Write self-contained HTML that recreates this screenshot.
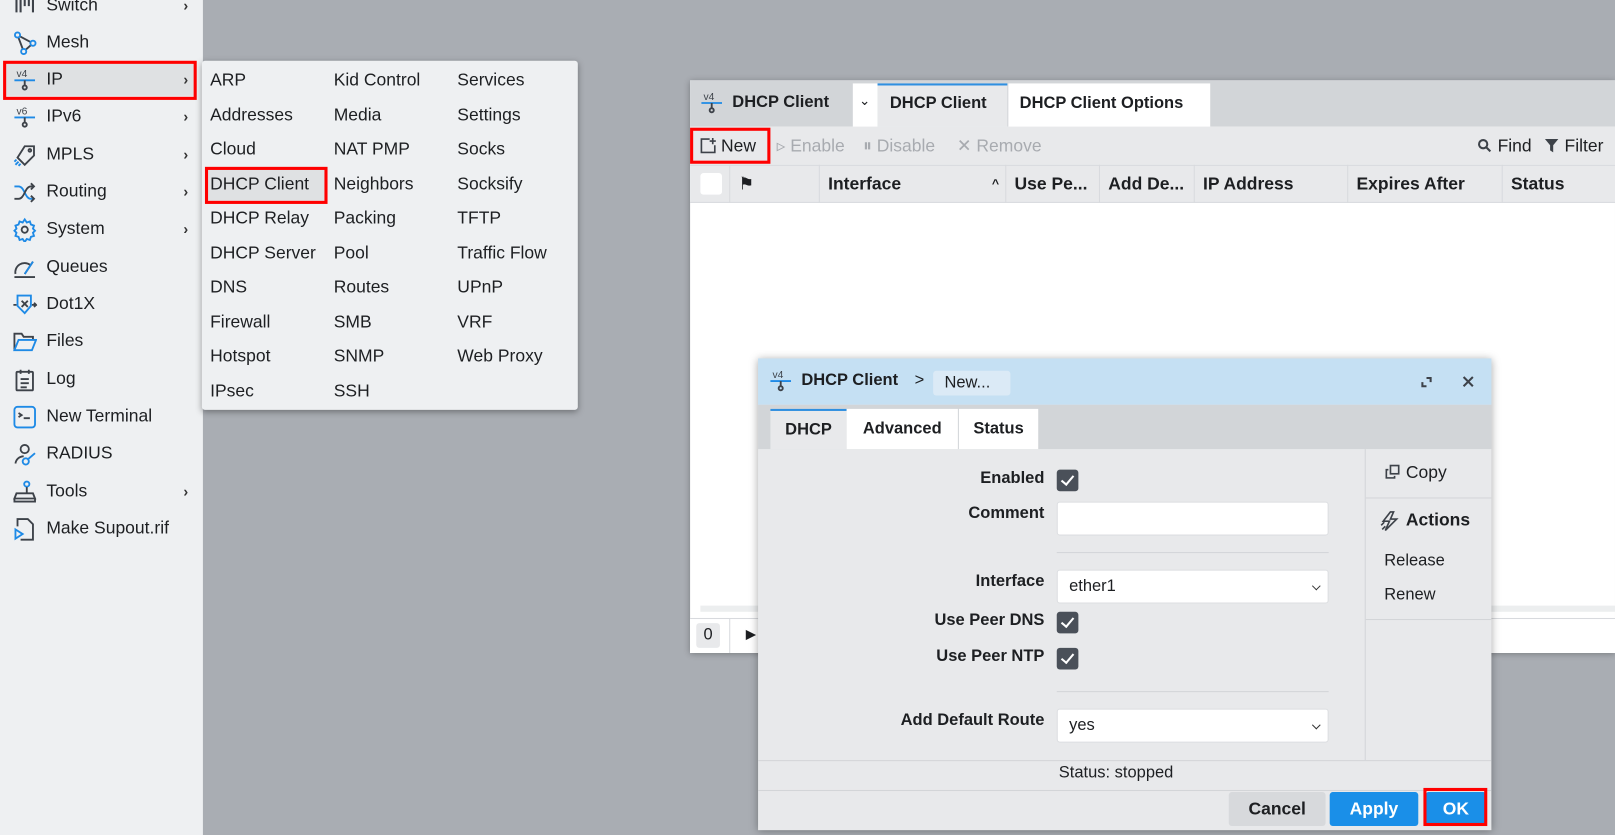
<!DOCTYPE html>
<html><head><meta charset="utf-8"><style>
*{box-sizing:border-box;margin:0;padding:0}
html,body{width:1615px;height:835px;overflow:hidden;background:#a9adb3}
body{font-family:"Liberation Sans",sans-serif;color:#1d1f22}
#wrap{position:absolute;left:0;top:0;width:1568px;height:811px;transform:scale(1.02997);transform-origin:0 0}
.a{position:absolute}
#side{left:0;top:0;width:197px;height:811px;background:#eef0f2}
.si{position:absolute;left:0;width:197px;height:36px;font-size:17px;line-height:36px}
.si span{position:absolute;left:45px}
.si svg{position:absolute;left:12px;top:7px}
.si .ch{position:absolute;left:178px;font-size:14px;color:#333}
#sub{left:196px;top:59px;width:365px;height:339px;background:#eef0f2;box-shadow:0 2px 6px rgba(0,0,0,.35);border-radius:3px}
.m{position:absolute;font-size:17px;line-height:20px}
.red{position:absolute;border:3px solid #f00}
#win{left:670px;top:78px;width:898px;height:556px;background:#fff;box-shadow:0 1px 6px rgba(0,0,0,.3)}
.t{font-size:17px;position:absolute}
.dis{color:#a8abb0}
.th{position:absolute;top:82px;height:37px;line-height:37px;font-size:17px;font-weight:600;border-left:1px solid #d8dade;padding-left:8px}
.lbl{position:absolute;right:0;font-size:16px;font-weight:600;text-align:right}
.cb{position:absolute;width:21px;height:21px;background:#4a5059;border-radius:3px}
.cb:after{content:"";position:absolute;left:7px;top:3px;width:5px;height:10px;border:solid #fff;border-width:0 2px 2px 0;transform:rotate(40deg)}
.inp{position:absolute;left:1026px;width:264px;height:33px;background:#fff;border:1px solid #dcdee1;border-radius:3px;font-size:16px;line-height:31px;padding-left:11px}
.sel:after{content:"";position:absolute;right:8px;top:12px;width:5px;height:5px;border:solid #333;border-width:0 1.5px 1.5px 0;transform:rotate(45deg)}
</style></head><body><div id="wrap">

<div id="side" class="a">
 <div class="si" style="top:-13px"><svg width="24" height="24" viewBox="0 0 24 24" fill="none" stroke="#3d4249" stroke-width="2"><path d="M4 2v16M8 2v16M12 2v10M16 2v10M20 2v16"/></svg><span>Switch</span><b class="ch">›</b></div>
 <div class="si" style="top:23px"><svg width="24" height="24" viewBox="0 0 24 24" fill="none" stroke="#3d4249" stroke-width="1.8"><path d="M5 4l15 8-9 8zM5 4l6 16"/><circle cx="5" cy="4" r="2.5" stroke="#1e8ae6" fill="#eef0f2"/><circle cx="20" cy="12" r="2.5" stroke="#1e8ae6" fill="#eef0f2"/><circle cx="11" cy="20" r="2.5" stroke="#1e8ae6" fill="#eef0f2"/></svg><span>Mesh</span></div>
 <div class="a" style="left:6px;top:62px;width:182px;height:31px;background:#dfe1e3"></div>
 <div class="si" style="top:59px"><svg width="24" height="24" viewBox="0 0 24 24" fill="none" stroke-width="1.8"><text x="4" y="9" font-size="10" fill="#3d4249" stroke="none" font-family="Liberation Sans">v4</text><path d="M2 12h20" stroke="#1e8ae6"/><path d="M12 12v5" stroke="#3d4249"/><circle cx="12" cy="19" r="2" stroke="#3d4249"/></svg><span>IP</span><b class="ch">›</b></div>
 <div class="si" style="top:95px"><svg width="24" height="24" viewBox="0 0 24 24" fill="none" stroke-width="1.8"><text x="4" y="9" font-size="10" fill="#3d4249" stroke="none" font-family="Liberation Sans">v6</text><path d="M2 12h20" stroke="#1e8ae6"/><path d="M12 12v5" stroke="#3d4249"/><circle cx="12" cy="19" r="2" stroke="#3d4249"/></svg><span>IPv6</span><b class="ch">›</b></div>
 <div class="si" style="top:132px"><svg width="24" height="24" viewBox="0 0 24 24" fill="none" stroke="#3d4249" stroke-width="1.8"><path d="M12 3h9v9l-9 9-7-7 7-11z"/><circle cx="17" cy="7" r="1.3"/><path d="M3 21l3-3M6 22l2-2M2 18l2-2" stroke="#1e8ae6"/></svg><span>MPLS</span><b class="ch">›</b></div>
 <div class="si" style="top:168px"><svg width="24" height="24" viewBox="0 0 24 24" fill="none" stroke-width="1.8"><path d="M2 6h4c6 0 6 12 12 12h3" stroke="#1e8ae6"/><path d="M2 18h4c6 0 6-12 12-12h3M18 3l3 3-3 3M18 15l3 3-3 3" stroke="#3d4249"/></svg><span>Routing</span><b class="ch">›</b></div>
 <div class="si" style="top:204px"><svg width="24" height="24" viewBox="0 0 24 24" fill="none" stroke="#1e8ae6" stroke-width="1.8"><path d="M12 2l2 3 3-1 1 3 3 1-1 3 2 2-2 2 1 3-3 1-1 3-3-1-2 3-2-3-3 1-1-3-3-1 1-3-2-2 2-2-1-3 3-1 1-3 3 1z"/><circle cx="12" cy="12" r="3" stroke="#3d4249"/></svg><span>System</span><b class="ch">›</b></div>
 <div class="si" style="top:241px"><svg width="24" height="24" viewBox="0 0 24 24" fill="none" stroke="#3d4249" stroke-width="1.8"><path d="M3 18a9 9 0 0 1 14-9M2 21h20M12 18l8-12" /><path d="M12 18l8-12" stroke="#1e8ae6"/></svg><span>Queues</span></div>
 <div class="si" style="top:277px"><svg width="24" height="24" viewBox="0 0 24 24" fill="none" stroke="#3d4249" stroke-width="1.8"><path d="M5 3h13v10l-6 7-7-7z" stroke="#1e8ae6"/><path d="M9 8l6 6M15 8l-6 6M1 12h3M19 12h4l-2-2M21 14l2-2"/></svg><span>Dot1X</span></div>
 <div class="si" style="top:313px"><svg width="24" height="24" viewBox="0 0 24 24" fill="none" stroke-width="1.8"><path d="M2 20V4h7l2 3h9v3" stroke="#3d4249"/><path d="M2 20l4-10h17l-4 10z" stroke="#1e8ae6"/></svg><span>Files</span></div>
 <div class="si" style="top:350px"><svg width="24" height="24" viewBox="0 0 24 24" fill="none" stroke="#3d4249" stroke-width="1.8"><rect x="4" y="4" width="16" height="18" rx="1"/><path d="M8 2v4M16 2v4M8 11h8M8 15h8M8 19h6"/></svg><span>Log</span></div>
 <div class="si" style="top:386px"><svg width="24" height="24" viewBox="0 0 24 24" fill="none" stroke="#1e8ae6" stroke-width="1.8"><rect x="2" y="2" width="20" height="20" rx="3"/><path d="M6 8l3 2-3 2M11 13h6" stroke="#3d4249"/></svg><span>New Terminal</span></div>
 <div class="si" style="top:422px"><svg width="24" height="24" viewBox="0 0 24 24" fill="none" stroke-width="1.8"><circle cx="12" cy="7" r="4" stroke="#3d4249"/><path d="M3 21a8 8 0 0 1 8-7" stroke="#3d4249"/><circle cx="13" cy="19" r="3" stroke="#1e8ae6"/><path d="M15 17l7-6" stroke="#1e8ae6"/></svg><span>RADIUS</span></div>
 <div class="si" style="top:459px"><svg width="24" height="24" viewBox="0 0 24 24" fill="none" stroke="#3d4249" stroke-width="1.8"><circle cx="14" cy="4" r="2.5" stroke="#1e8ae6"/><path d="M14 7v6M4 13h16l2 5H2zM2 18v3h20v-3" /></svg><span>Tools</span><b class="ch">›</b></div>
 <div class="si" style="top:495px"><svg width="24" height="24" viewBox="0 0 24 24" fill="none" stroke-width="1.8"><path d="M5 9V2h10l5 5v15H8" stroke="#3d4249"/><path d="M3 12v9l7-4.5z" stroke="#1e8ae6"/></svg><span>Make Supout.rif</span></div>
</div>
<div class="red" style="left:3px;top:59px;width:188px;height:38px"></div>

<div id="sub" class="a">
 <div class="a" style="left:5px;top:106px;width:114px;height:30px;background:#dfe1e3"></div>
 <div class="m" style="left:8px;top:9px">ARP</div><div class="m" style="left:8px;top:43px">Addresses</div><div class="m" style="left:8px;top:76px">Cloud</div><div class="m" style="left:8px;top:110px">DHCP Client</div><div class="m" style="left:8px;top:143px">DHCP Relay</div><div class="m" style="left:8px;top:177px">DHCP Server</div><div class="m" style="left:8px;top:210px">DNS</div><div class="m" style="left:8px;top:244px">Firewall</div><div class="m" style="left:8px;top:277px">Hotspot</div><div class="m" style="left:8px;top:311px">IPsec</div>
 <div class="m" style="left:128px;top:9px">Kid Control</div><div class="m" style="left:128px;top:43px">Media</div><div class="m" style="left:128px;top:76px">NAT PMP</div><div class="m" style="left:128px;top:110px">Neighbors</div><div class="m" style="left:128px;top:143px">Packing</div><div class="m" style="left:128px;top:177px">Pool</div><div class="m" style="left:128px;top:210px">Routes</div><div class="m" style="left:128px;top:244px">SMB</div><div class="m" style="left:128px;top:277px">SNMP</div><div class="m" style="left:128px;top:311px">SSH</div>
 <div class="m" style="left:248px;top:9px">Services</div><div class="m" style="left:248px;top:43px">Settings</div><div class="m" style="left:248px;top:76px">Socks</div><div class="m" style="left:248px;top:110px">Socksify</div><div class="m" style="left:248px;top:143px">TFTP</div><div class="m" style="left:248px;top:177px">Traffic Flow</div><div class="m" style="left:248px;top:210px">UPnP</div><div class="m" style="left:248px;top:244px">VRF</div><div class="m" style="left:248px;top:277px">Web Proxy</div>
</div>
<div class="red" style="left:199px;top:162px;width:119px;height:36px"></div>

<div id="win" class="a">
 <div class="a" style="left:0;top:0;width:898px;height:45px;background:#d2d5d8"></div>
 <svg class="a" style="left:9px;top:10px" width="24" height="24" viewBox="0 0 24 24" fill="none" stroke-width="1.8"><text x="4" y="9" font-size="10" fill="#3d4249" stroke="none" font-family="Liberation Sans">v4</text><path d="M2 12h20" stroke="#1e8ae6"/><path d="M12 12v5" stroke="#3d4249"/><circle cx="12" cy="19" r="2" stroke="#3d4249"/></svg>
 <div class="t" style="left:41px;top:13px;font-weight:700;font-size:16px">DHCP Client</div>
 <div class="a" style="left:158px;top:3px;width:24px;height:42px;background:#fff"></div>
 <div class="t" style="left:164px;top:12px;font-size:13px">⌄</div>
 <div class="a" style="left:182px;top:3px;width:126px;height:42px;background:#e8e9eb;border-top:2px solid #2f8fe0"></div>
 <div class="t" style="left:194px;top:14px;font-weight:600;font-size:16px">DHCP Client</div>
 <div class="a" style="left:309px;top:3px;width:196px;height:42px;background:#fff"></div>
 <div class="t" style="left:320px;top:14px;font-weight:600;font-size:16px">DHCP Client Options</div>
 <div class="a" style="left:0;top:45px;width:898px;height:37px;background:#e8e9eb"></div>
 <svg class="a" style="left:9px;top:55px" width="17" height="17" viewBox="0 0 17 17" fill="none" stroke="#3d4249" stroke-width="1.6"><path d="M10 2H2v13h13V8"/><path d="M13 1v6M10 4h6"/></svg>
 <div class="t" style="left:30px;top:54px">New</div>
 <div class="t dis" style="left:84px;top:54px">▹ Enable</div>
 <div class="t dis" style="left:168px;top:54px">⏸ Disable</div>
 <div class="t dis" style="left:259px;top:54px">✕ Remove</div>
 <svg class="a" style="left:764px;top:56px" width="15" height="15" viewBox="0 0 15 15" fill="none" stroke="#3d4249" stroke-width="2"><circle cx="6" cy="6" r="4"/><path d="M9 9l4 4"/></svg>
 <div class="t" style="left:784px;top:54px">Find</div>
 <svg class="a" style="left:829px;top:56px" width="15" height="15" viewBox="0 0 15 15" fill="#3d4249"><path d="M1 1h13L9 7v7L6 12V7z"/></svg>
 <div class="t" style="left:849px;top:54px">Filter</div>
 <div class="a" style="left:0;top:82px;width:898px;height:37px;background:#e8e9eb;border-top:1px solid #d8dade;border-bottom:1px solid #d8dade"></div>
 <div class="a" style="left:10px;top:90px;width:21px;height:21px;background:#fff;border-radius:3px"></div>
 <div class="th" style="left:38px;width:87px;font-weight:400">⚑</div>
 <div class="th" style="left:125px;width:181px">Interface<span style="position:absolute;right:6px;font-size:12px">^</span></div>
 <div class="th" style="left:306px;width:91px">Use Pe...</div>
 <div class="th" style="left:397px;width:92px">Add De...</div>
 <div class="th" style="left:489px;width:149px">IP Address</div>
 <div class="th" style="left:638px;width:150px">Expires After</div>
 <div class="th" style="left:788px;width:110px">Status</div>
 <div class="a" style="left:10px;top:510px;width:888px;height:6px;background:#eceeef"></div>
 <div class="a" style="left:0;top:522px;width:898px;height:34px;border-top:1px solid #d8dade;background:#fff"></div>
 <div class="a" style="left:6px;top:527px;width:23px;height:24px;background:#e8e9eb;border-radius:3px;font-size:16px;text-align:center;line-height:24px">0</div>
 <div class="a" style="left:38px;top:523px;width:1px;height:33px;background:#d8dade"></div>
 <div class="t" style="left:54px;top:530px;font-size:13px">▶</div>
</div>
<div class="red" style="left:670px;top:124px;width:78px;height:35px"></div>

<div class="a" style="left:736px;top:348px;width:712px;height:458px;background:#e8e9eb;box-shadow:0 1px 8px rgba(0,0,0,.35)">
 <div class="a" style="left:0;top:0;width:712px;height:45px;background:#c5e0f3"></div>
 <svg class="a" style="left:10px;top:10px" width="24" height="24" viewBox="0 0 24 24" fill="none" stroke-width="1.8"><text x="4" y="9" font-size="10" fill="#3d4249" stroke="none" font-family="Liberation Sans">v4</text><path d="M2 12h20" stroke="#1e8ae6"/><path d="M12 12v5" stroke="#3d4249"/><circle cx="12" cy="19" r="2" stroke="#3d4249"/></svg>
 <div class="t" style="left:42px;top:13px;font-weight:700;font-size:16px">DHCP Client</div>
 <div class="t" style="left:152px;top:13px;font-size:16px">&gt;</div>
 <div class="a" style="left:170px;top:12px;width:75px;height:24px;background:#dbeaf6;border-radius:3px;font-size:16px;line-height:24px;padding-left:11px">New...</div>
 <svg class="a" style="left:643px;top:17px" width="12" height="12" viewBox="0 0 12 12" fill="none" stroke="#3d4249" stroke-width="2"><path d="M6 2h4v4M6 10H2V6"/></svg>
 <svg class="a" style="left:683px;top:16px" width="13" height="13" viewBox="0 0 13 13" stroke="#3d4249" stroke-width="2"><path d="M2 2l9 9M11 2l-9 9"/></svg>
 <div class="a" style="left:0;top:45px;width:712px;height:43px;background:#d2d5d8"></div>
 <div class="a" style="left:12px;top:49px;width:74px;height:39px;background:#e8e9eb;border-top:2px solid #2f8fe0;font-size:16px;font-weight:600;line-height:37px;text-align:center">DHCP</div>
 <div class="a" style="left:86px;top:49px;width:108px;height:39px;background:#fff;font-size:16px;font-weight:600;line-height:39px;text-align:center">Advanced</div>
 <div class="a" style="left:195px;top:49px;width:77px;height:39px;background:#fff;font-size:16px;font-weight:600;line-height:39px;text-align:center">Status</div>
 <div class="a" style="left:589px;top:88px;width:1px;height:302px;background:#d3d5d8"></div>
 <div class="a" style="left:590px;top:135px;width:122px;height:1px;background:#d3d5d8"></div>
 <div class="a" style="left:590px;top:253px;width:122px;height:1px;background:#d3d5d8"></div>
 <svg class="a" style="left:609px;top:103px" width="14" height="14" viewBox="0 0 14 14" fill="none" stroke="#3d4249" stroke-width="1.6"><rect x="5" y="1" width="8" height="8"/><path d="M3 5H1v8h8v-2"/></svg>
 <div class="t" style="left:629px;top:101px">Copy</div>
 <svg class="a" style="left:604px;top:148px" width="18" height="20" viewBox="0 0 18 20" fill="none" stroke="#3d4249" stroke-width="1.6"><path d="M10 1L3 10h6l-4 9 11-11h-6l3-7zM1 14l3-3M2 18l3-3"/></svg>
 <div class="t" style="left:629px;top:147px;font-weight:700">Actions</div>
 <div class="t" style="left:608px;top:188px;font-size:16px">Release</div>
 <div class="t" style="left:608px;top:221px;font-size:16px">Renew</div>
 <div class="a" style="left:290px;top:188px;width:264px;height:1px;background:#d3d5d8"></div>
 <div class="a" style="left:290px;top:323px;width:264px;height:1px;background:#d3d5d8"></div>
 <div class="a" style="left:0;top:390px;width:712px;height:1px;background:#d3d5d8"></div>
 <div class="a" style="left:0;top:419px;width:712px;height:1px;background:#d3d5d8"></div>
 <div class="t" style="left:292px;top:394px;font-size:16px">Status: stopped</div>
 <div class="a" style="left:457px;top:421px;width:94px;height:33px;background:#d7d9dc;border-radius:3px;font-weight:700;font-size:17px;text-align:center;line-height:33px">Cancel</div>
 <div class="a" style="left:555px;top:421px;width:86px;height:33px;background:#1a8fe8;color:#fff;border-radius:3px;font-weight:700;font-size:17px;text-align:center;line-height:33px">Apply</div>
 <div class="a" style="left:648px;top:421px;width:59px;height:33px;background:#1a8fe8;color:#fff;border-radius:3px;font-weight:700;font-size:17px;text-align:center;line-height:33px">OK</div>
</div>
<div class="red" style="left:1382px;top:765px;width:62px;height:37px"></div>

<div class="a" style="left:736px;top:0;width:278px;height:811px">
 <div class="lbl" style="top:456px">Enabled</div>
 <div class="lbl" style="top:490px">Comment</div>
 <div class="lbl" style="top:556px">Interface</div>
 <div class="lbl" style="top:594px">Use Peer DNS</div>
 <div class="lbl" style="top:629px">Use Peer NTP</div>
 <div class="lbl" style="top:691px">Add Default Route</div>
</div>
<div class="cb" style="left:1026px;top:456px"></div>
<div class="inp" style="top:487px"></div>
<div class="inp sel" style="top:553px">ether1</div>
<div class="cb" style="left:1026px;top:594px"></div>
<div class="cb" style="left:1026px;top:629px"></div>
<div class="inp sel" style="top:688px">yes</div>

</div></body></html>
